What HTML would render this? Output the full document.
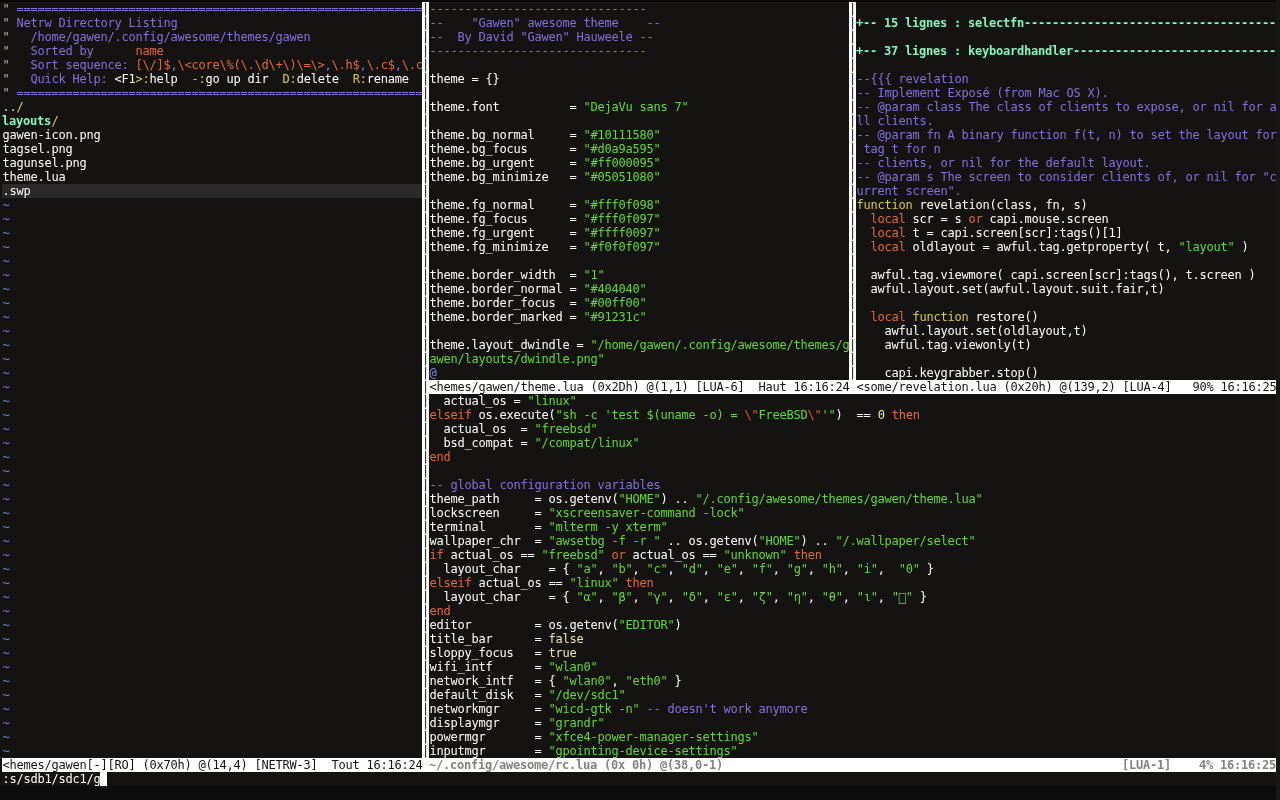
<!DOCTYPE html>
<html lang="fr"><head><meta charset="utf-8"><title>vim</title>
<style>
html,body{margin:0;padding:0}
body{width:1280px;height:800px;overflow:hidden;background:#141312;position:relative}
.p{position:absolute;margin:0;padding-left:0.5px;font-family:"DejaVu Sans Mono","Liberation Mono",monospace;font-size:12px;line-height:14px;letter-spacing:-0.2246px;white-space:pre;color:#fff;font-kerning:none;font-variant-ligatures:none;will-change:transform}
.bg{position:absolute;background:#fff}
.bx{position:relative;top:2px}
.sp{padding-left:0;margin-left:-0.07px}
.w{color:#ffffff}
.c{color:#8272dc}
.o{color:#e26a34}
.y{color:#dcc850}
.g{color:#66d832}
.n{color:#ece8b4}
.r{color:#e05530}
.f{color:#84f4bc;font-weight:bold;position:relative;left:-0.6px}
.b{color:#7484e0}
.q{color:#b4b4b4}
.d{color:#c4ecd4}
.k{color:#141414}
.s{color:#828282;font-weight:bold;position:relative;left:-0.6px}
</style></head>
<body>
<div style="position:absolute;left:0;top:0;width:1280px;height:2px;background:#090808"></div>
<div style="position:absolute;left:0;top:786px;width:1280px;height:14px;background:#0d0c0d"></div>
<div style="position:absolute;left:1276px;top:0;width:4px;height:800px;background:#181717"></div>
<div style="position:absolute;left:2px;top:184px;width:420px;height:14px;background:#2a2a2b"></div>
<div class="bg" style="left:422px;top:2px;width:7px;height:756px"></div>
<div class="bg" style="left:849px;top:2px;width:7px;height:378px"></div>
<div class="bg" style="left:429px;top:380px;width:847px;height:14px"></div>
<div class="bg" style="left:2px;top:758px;width:1274px;height:14px"></div>
<div class="bg" style="left:100px;top:772px;width:7px;height:14px"></div>
<pre class="p " style="left:2px;top:2px">
<span class="q">"</span><span class="c"> ==========================================================</span>
<span class="q">"</span><span class="c"> Netrw Directory Listing</span>
<span class="q">"</span><span class="c">   /home/gawen/.config/awesome/themes/gawen</span>
<span class="q">"</span><span class="c">   Sorted by      </span><span class="o">name</span>
<span class="q">"</span><span class="c">   Sort sequence: </span><span class="o">[\/]$</span><span class="c">,</span><span class="o">\&lt;core\%(\.\d\+\)\=\&gt;</span><span class="c">,</span><span class="o">\.h$</span><span class="c">,</span><span class="o">\.c$</span><span class="c">,</span><span class="o">\.c</span>
<span class="q">"</span><span class="c">   Quick Help: </span><span class="w">&lt;F1</span><span class="y">&gt;:</span><span class="w">help  </span><span class="y">-:</span><span class="w">go up dir  </span><span class="y">D:</span><span class="w">delete  </span><span class="y">R:</span><span class="w">rename</span>
<span class="q">"</span><span class="c"> ==========================================================</span>
<span class="d">..</span><span class="y">/</span>
<span class="f">layouts</span><span class="y">/</span>
<span class="w">gawen-icon.png</span>
<span class="w">tagsel.png</span>
<span class="w">tagunsel.png</span>
<span class="w">theme.lua</span>
<span class="w">.swp</span>
<span class="b">~</span>
<span class="b">~</span>
<span class="b">~</span>
<span class="b">~</span>
<span class="b">~</span>
<span class="b">~</span>
<span class="b">~</span>
<span class="b">~</span>
<span class="b">~</span>
<span class="b">~</span>
<span class="b">~</span>
<span class="b">~</span>
<span class="b">~</span>
<span class="b">~</span>
<span class="b">~</span>
<span class="b">~</span>
<span class="b">~</span>
<span class="b">~</span>
<span class="b">~</span>
<span class="b">~</span>
<span class="b">~</span>
<span class="b">~</span>
<span class="b">~</span>
<span class="b">~</span>
<span class="b">~</span>
<span class="b">~</span>
<span class="b">~</span>
<span class="b">~</span>
<span class="b">~</span>
<span class="b">~</span>
<span class="b">~</span>
<span class="b">~</span>
<span class="b">~</span>
<span class="b">~</span>
<span class="b">~</span>
<span class="b">~</span>
<span class="b">~</span>
<span class="b">~</span>
<span class="b">~</span>
<span class="b">~</span></pre>
<pre class="p " style="left:429px;top:2px">
<span class="c">-------------------------------</span>
<span class="c">--    "Gawen" awesome theme    --</span>
<span class="c">--  By David "Gawen" Hauweele --</span>
<span class="c">-------------------------------</span>

<span class="w">theme = {}</span>

<span class="w">theme.font          = </span><span class="g">"DejaVu sans 7"</span>

<span class="w">theme.bg_normal     = </span><span class="g">"#10111580"</span>
<span class="w">theme.bg_focus      = </span><span class="g">"#d0a9a595"</span>
<span class="w">theme.bg_urgent     = </span><span class="g">"#ff000095"</span>
<span class="w">theme.bg_minimize   = </span><span class="g">"#05051080"</span>

<span class="w">theme.fg_normal     = </span><span class="g">"#fff0f098"</span>
<span class="w">theme.fg_focus      = </span><span class="g">"#fff0f097"</span>
<span class="w">theme.fg_urgent     = </span><span class="g">"#ffff0097"</span>
<span class="w">theme.fg_minimize   = </span><span class="g">"#f0f0f097"</span>

<span class="w">theme.border_width  = </span><span class="g">"1"</span>
<span class="w">theme.border_normal = </span><span class="g">"#404040"</span>
<span class="w">theme.border_focus  = </span><span class="g">"#00ff00"</span>
<span class="w">theme.border_marked = </span><span class="g">"#91231c"</span>

<span class="w">theme.layout_dwindle = </span><span class="g">"/home/gawen/.config/awesome/themes/g</span>
<span class="g">awen/layouts/dwindle.png"</span>
<span class="b">@</span></pre>
<pre class="p " style="left:856px;top:2px">

<span class="f">+-- 15 lignes : selectfn------------------------------------</span>

<span class="f">+-- 37 lignes : keyboardhandler-----------------------------</span>

<span class="c">--{{{ revelation</span>
<span class="c">-- Implement Exposé (from Mac OS X).</span>
<span class="c">-- @param class The class of clients to expose, or nil for a</span>
<span class="c">ll clients.</span>
<span class="c">-- @param fn A binary function f(t, n) to set the layout for</span>
<span class="c"> tag t for n</span>
<span class="c">-- clients, or nil for the default layout.</span>
<span class="c">-- @param s The screen to consider clients of, or nil for "c</span>
<span class="c">urrent screen".</span>
<span class="y">function</span><span class="w"> revelation(class, fn, s)</span>
<span class="w">  </span><span class="o">local</span><span class="w"> scr = s </span><span class="o">or</span><span class="w"> capi.mouse.screen</span>
<span class="w">  </span><span class="o">local</span><span class="w"> t = capi.screen[scr]:tags()[1]</span>
<span class="w">  </span><span class="o">local</span><span class="w"> oldlayout = awful.tag.getproperty( t, </span><span class="g">"layout"</span><span class="w"> )</span>

<span class="w">  awful.tag.viewmore( capi.screen[scr]:tags(), t.screen )</span>
<span class="w">  awful.layout.set(awful.layout.suit.fair,t)</span>

<span class="w">  </span><span class="o">local</span><span class="w"> </span><span class="y">function</span><span class="w"> restore()</span>
<span class="w">    awful.layout.set(oldlayout,t)</span>
<span class="w">    awful.tag.viewonly(t)</span>

<span class="w">    capi.keygrabber.stop()</span></pre>
<pre class="p " style="left:429px;top:394px">
<span class="w">  actual_os = </span><span class="g">"linux"</span>
<span class="o">elseif</span><span class="w"> os.execute(</span><span class="g">"sh -c 'test $(uname -o) = </span><span class="r">\"</span><span class="g">FreeBSD</span><span class="r">\"</span><span class="g">'"</span><span class="w">)  == </span><span class="n">0</span><span class="w"> </span><span class="o">then</span>
<span class="w">  actual_os  = </span><span class="g">"freebsd"</span>
<span class="w">  bsd_compat = </span><span class="g">"/compat/linux"</span>
<span class="o">end</span>

<span class="c">-- global configuration variables</span>
<span class="w">theme_path     = </span><span class="w">os.getenv(</span><span class="g">"HOME"</span><span class="w">) .. </span><span class="g">"/.config/awesome/themes/gawen/theme.lua"</span>
<span class="w">lockscreen     = </span><span class="g">"xscreensaver-command -lock"</span>
<span class="w">terminal       = </span><span class="g">"mlterm -y xterm"</span>
<span class="w">wallpaper_chr  = </span><span class="g">"awsetbg -f -r "</span><span class="w"> .. os.getenv(</span><span class="g">"HOME"</span><span class="w">) .. </span><span class="g">"/.wallpaper/select"</span>
<span class="o">if</span><span class="w"> actual_os == </span><span class="g">"freebsd"</span><span class="w"> </span><span class="o">or</span><span class="w"> actual_os == </span><span class="g">"unknown"</span><span class="w"> </span><span class="o">then</span>
<span class="w">  layout_char    = </span><span class="w">{ </span><span class="g">"a"</span><span class="w">, </span><span class="g">"b"</span><span class="w">, </span><span class="g">"c"</span><span class="w">, </span><span class="g">"d"</span><span class="w">, </span><span class="g">"e"</span><span class="w">, </span><span class="g">"f"</span><span class="w">, </span><span class="g">"g"</span><span class="w">, </span><span class="g">"h"</span><span class="w">, </span><span class="g">"i"</span><span class="w">,  </span><span class="g">"0"</span><span class="w"> }</span>
<span class="o">elseif</span><span class="w"> actual_os == </span><span class="g">"linux"</span><span class="w"> </span><span class="o">then</span>
<span class="w">  layout_char    = </span><span class="w">{ </span><span class="g">"α"</span><span class="w">, </span><span class="g">"β"</span><span class="w">, </span><span class="g">"γ"</span><span class="w">, </span><span class="g">"δ"</span><span class="w">, </span><span class="g">"ε"</span><span class="w">, </span><span class="g">"ζ"</span><span class="w">, </span><span class="g">"η"</span><span class="w">, </span><span class="g">"θ"</span><span class="w">, </span><span class="g">"ι"</span><span class="w">, </span><span class="g">"<span class="bx">⎕</span>"</span><span class="w"> }</span>
<span class="o">end</span>
<span class="w">editor         = </span><span class="w">os.getenv(</span><span class="g">"EDITOR"</span><span class="w">)</span>
<span class="w">title_bar      = </span><span class="n">false</span>
<span class="w">sloppy_focus   = </span><span class="n">true</span>
<span class="w">wifi_intf      = </span><span class="g">"wlan0"</span>
<span class="w">network_intf   = </span><span class="w">{ </span><span class="g">"wlan0"</span><span class="w">, </span><span class="g">"eth0"</span><span class="w"> }</span>
<span class="w">default_disk   = </span><span class="g">"/dev/sdc1"</span>
<span class="w">networkmgr     = </span><span class="g">"wicd-gtk -n"</span><span class="w"> </span><span class="c">-- doesn't work anymore</span>
<span class="w">displaymgr     = </span><span class="g">"grandr"</span>
<span class="w">powermgr       = </span><span class="g">"xfce4-power-manager-settings"</span>
<span class="w">inputmgr       = </span><span class="g">"gpointing-device-settings"</span></pre>
<pre class="p sp" style="left:422px;top:2px">
<span class="k">|</span>
<span class="k">|</span>
<span class="k">|</span>
<span class="k">|</span>
<span class="k">|</span>
<span class="k">|</span>
<span class="k">|</span>
<span class="k">|</span>
<span class="k">|</span>
<span class="k">|</span>
<span class="k">|</span>
<span class="k">|</span>
<span class="k">|</span>
<span class="k">|</span>
<span class="k">|</span>
<span class="k">|</span>
<span class="k">|</span>
<span class="k">|</span>
<span class="k">|</span>
<span class="k">|</span>
<span class="k">|</span>
<span class="k">|</span>
<span class="k">|</span>
<span class="k">|</span>
<span class="k">|</span>
<span class="k">|</span>
<span class="k">|</span>
<span class="k">|</span>
<span class="k">|</span>
<span class="k">|</span>
<span class="k">|</span>
<span class="k">|</span>
<span class="k">|</span>
<span class="k">|</span>
<span class="k">|</span>
<span class="k">|</span>
<span class="k">|</span>
<span class="k">|</span>
<span class="k">|</span>
<span class="k">|</span>
<span class="k">|</span>
<span class="k">|</span>
<span class="k">|</span>
<span class="k">|</span>
<span class="k">|</span>
<span class="k">|</span>
<span class="k">|</span>
<span class="k">|</span>
<span class="k">|</span>
<span class="k">|</span>
<span class="k">|</span>
<span class="k">|</span>
<span class="k">|</span>
<span class="k">|</span></pre>
<pre class="p sp" style="left:849px;top:2px">
<span class="k">|</span>
<span class="k">|</span>
<span class="k">|</span>
<span class="k">|</span>
<span class="k">|</span>
<span class="k">|</span>
<span class="k">|</span>
<span class="k">|</span>
<span class="k">|</span>
<span class="k">|</span>
<span class="k">|</span>
<span class="k">|</span>
<span class="k">|</span>
<span class="k">|</span>
<span class="k">|</span>
<span class="k">|</span>
<span class="k">|</span>
<span class="k">|</span>
<span class="k">|</span>
<span class="k">|</span>
<span class="k">|</span>
<span class="k">|</span>
<span class="k">|</span>
<span class="k">|</span>
<span class="k">|</span>
<span class="k">|</span>
<span class="k">|</span></pre>
<pre class="p " style="left:429px;top:380px">
<span class="k">&lt;hemes/gawen/theme.lua (0x2Dh) @(1,1) [LUA-6]  Haut 16:16:24 &lt;some/revelation.lua (0x20h) @(139,2) [LUA-4]   90% 16:16:25</span></pre>
<pre class="p " style="left:2px;top:758px">
<span class="k">&lt;hemes/gawen[-][RO] (0x70h) @(14,4) [NETRW-3]  Tout 16:16:24 </span><span class="s">~/.config/awesome/rc.lua (0x 0h) @(38,0-1)                                                         [LUA-1]    4% 16:16:25</span></pre>
<pre class="p " style="left:2px;top:772px">
<span class="w">:s/sdb1/sdc1/g</span></pre>
</body></html>
